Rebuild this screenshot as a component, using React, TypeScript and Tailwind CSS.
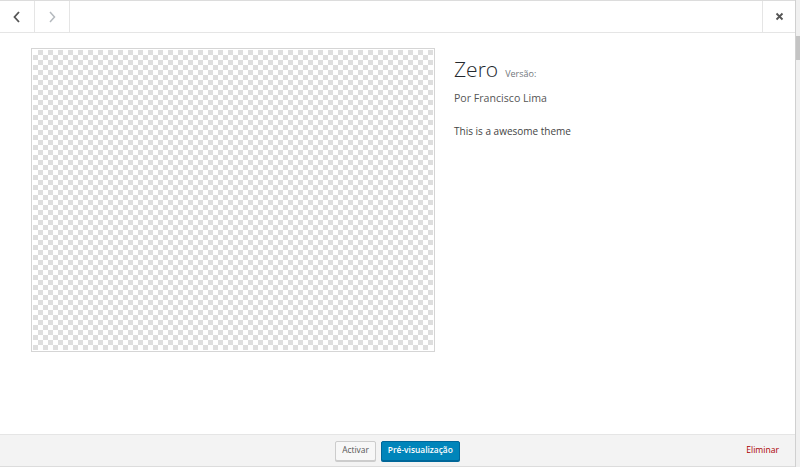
import React from 'react';

const checker: React.CSSProperties = {
    backgroundColor: '#ffffff',
    backgroundImage:
        'linear-gradient(45deg, #dedede 25%, transparent 25%, transparent 75%, #dedede 75%), linear-gradient(45deg, #dedede 25%, transparent 25%, transparent 75%, #dedede 75%)',
    backgroundSize: '10px 10px',
    backgroundPosition: '0 0, 5px 5px',
};

export default function App() {
    return (
        <div className="w-[800px] h-[467px] bg-[#dcdcdc] flex font-['Open_Sans',sans-serif] overflow-hidden">
            <div className="w-[795px] mt-[1px] mb-[1px] bg-white flex flex-col">
                {/* header */}
                <div className="h-[32px] flex border-b border-[#e5e5e5]">
                    <button className="w-[35px] flex items-center justify-center border-r border-[#e5e5e5] text-[#555]">
                        <svg width="10" height="12" viewBox="0 0 10 12" fill="none" stroke="currentColor" strokeWidth="1.8">
                            <path d="M7 1L2.5 6L7 11" />
                        </svg>
                    </button>
                    <button className="w-[35px] flex items-center justify-center border-r border-[#e5e5e5] text-[#b4b9be]">
                        <svg width="10" height="12" viewBox="0 0 10 12" fill="none" stroke="currentColor" strokeWidth="1.5">
                            <path d="M3 1L7.5 6L3 11" />
                        </svg>
                    </button>
                    <div className="flex-1" />
                    <button className="w-[33px] flex items-center justify-center border-l border-[#e5e5e5] text-[#555]">
                        <svg width="9" height="9" viewBox="0 0 9 9" fill="none" stroke="currentColor" strokeWidth="1.8">
                            <path d="M1.5 1.5L7.5 7.5M7.5 1.5L1.5 7.5" />
                        </svg>
                    </button>
                </div>

                {/* content */}
                <div className="flex-1 flex pl-[31px] pt-[15px] gap-[19px]">
                    <div className="w-[404px] h-[304px] border border-[#d5d5d5] p-[1px]">
                        <div className="w-full h-full" style={checker} />
                    </div>
                    <div className="flex flex-col pt-[7px]">
                        <div className="flex items-baseline gap-[7px]">
                            <h2 className="text-[21px] leading-[28px] font-light text-[#23282d]">Zero</h2>
                            <span className="text-[9px] text-[#72777c]">Versão:</span>
                        </div>
                        <p className="text-[10.6px] text-[#555] mt-[8px]">Por Francisco Lima</p>
                        <p className="text-[10px] text-[#444] mt-[17px]">This is a awesome theme</p>
                    </div>
                </div>

                {/* footer */}
                <div className="h-[32px] bg-[#f3f3f3] border-t border-[#e5e5e5] flex items-center">
                    <div className="flex-1" />
                    <div className="flex gap-[5px]">
                        <button className="h-[20px] px-[6px] text-[8.4px] text-[#555] bg-[#f7f7f7] border border-[#ccc] rounded-[2px] shadow-[0_1px_0_#ccc]">
                            Activar
                        </button>
                        <button className="h-[20px] px-[6px] text-[8.4px] font-semibold text-white bg-[#0085ba] border border-[#006799] rounded-[2px] shadow-[0_1px_0_#006799]">
                            Pré-visualização
                        </button>
                    </div>
                    <div className="flex-1 flex justify-end">
                        <span className="mr-[16px] text-[8.6px] text-[#a00]">Eliminar</span>
                    </div>
                </div>
            </div>
            {/* scrollbar */}
            <div className="flex-1 bg-[#f0f0f0] border-l border-[#d0d0d0] flex flex-col pt-[36px]">
                <div className="h-[24px] bg-[#c4c4c4]" />
            </div>
        </div>
    );
}
